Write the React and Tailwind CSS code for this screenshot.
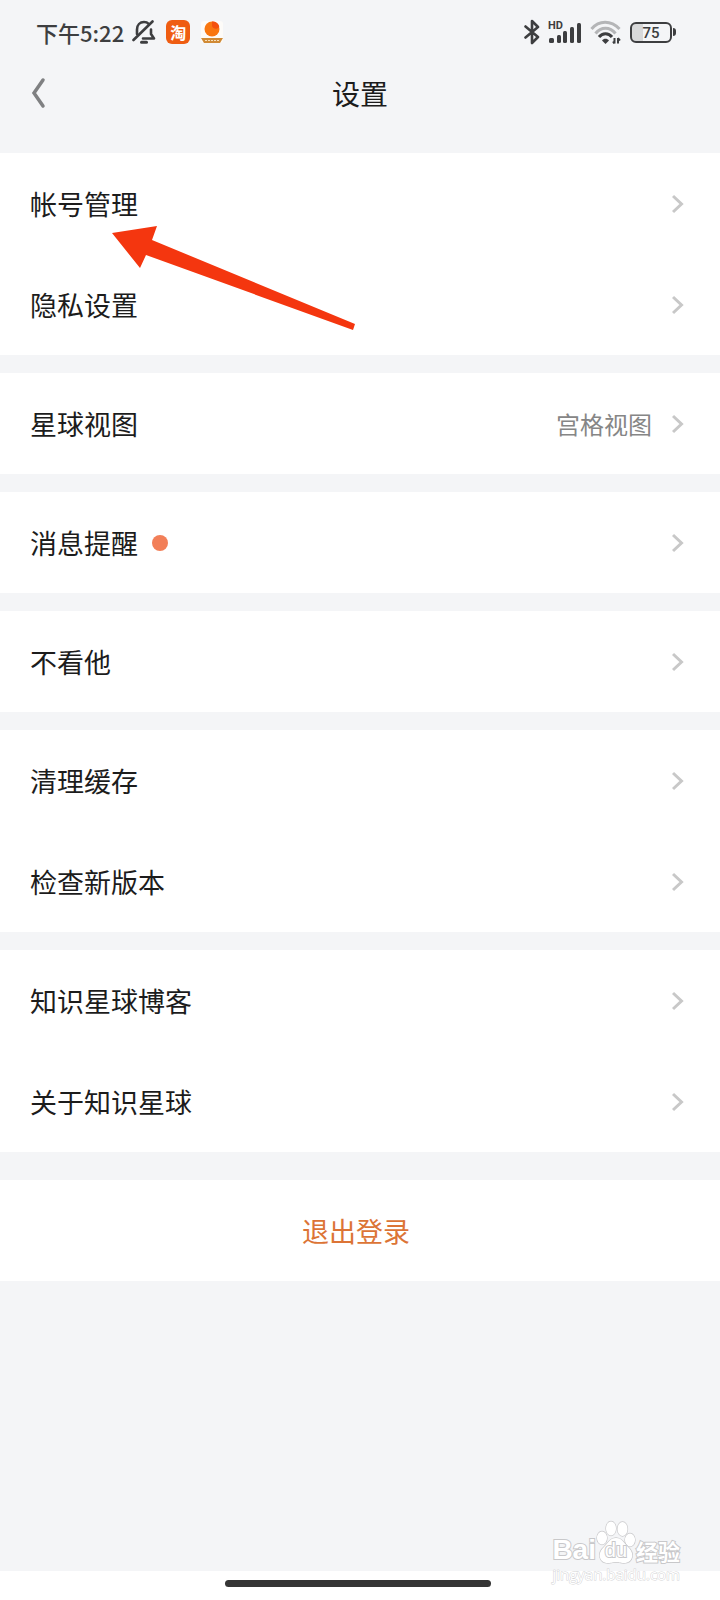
const GROUPS = [
  [{ label: '帐号管理' }, { label: '隐私设置' }],
  [{ label: '星球视图', value: '宫格视图' }],
  [{ label: '消息提醒', dot: true }],
  [{ label: '不看他' }],
  [{ label: '清理缓存' }, { label: '检查新版本' }],
  [{ label: '知识星球博客' }, { label: '关于知识星球' }],
]

function ChevronRight() {
  return (
    <svg className="w-3 h-5" viewBox="0 0 12 20" fill="none" stroke="#c8c8c8" strokeWidth="3">
      <path d="M1 2l8.500 8L1 18" />
    </svg>
  )
}

function BellOff() {
  return (
    <svg className="w-6 h-6" viewBox="0 0 24 24" fill="none" stroke="#3d3e40" strokeWidth="2.600" strokeLinecap="round" strokeLinejoin="round">
      <path d="M5 14V9.500C5 5 8 2 12 2c2 0 3.500.6 4.700 1.800M19 9.500V14l3 4.500H11" />
      <path d="M1.500 20L20.500 1.500" />
      <path d="M9.500 22.300h5" strokeWidth="3" />
    </svg>
  )
}

function PeachIcon() {
  return (
    <svg className="w-6 h-6" viewBox="0 0 24 24">
      <rect x="1" y="1" width="22" height="22" rx="3" fill="#fdfbf8" />
      <circle cx="12" cy="9" r="7.500" fill="#f9760f" />
      <path d="M12 1.500c4 0 7 2 7.200 5.500C17 10 13 9 12 6z" fill="#f4500c" />
      <path d="M1 18h22l-3 5H4z" fill="#d08a35" />
      <path d="M5 20.500h14" stroke="#f7dfba" strokeWidth="1.200" strokeDasharray="2 1" />
    </svg>
  )
}

function StatusBar() {
  return (
    <div className="h-16 pl-9 pr-11 flex items-center justify-between text-[#3d3e40]">
      <div className="flex items-center">
        <span className="text-[22px] leading-8 font-medium">下午5:22</span>
        <span className="ml-2"><BellOff /></span>
        <span className="ml-2.5 w-6 h-6 rounded-md bg-[#ef5d12] text-white text-base leading-6 font-bold text-center">淘</span>
        <span className="ml-2.5"><PeachIcon /></span>
      </div>
      <div className="flex items-center">
        <svg className="w-4 h-7" viewBox="0 0 16 28" fill="none" stroke="#3d3e40" strokeWidth="2.600" strokeLinejoin="round" strokeLinecap="round">
          <path d="M1.500 8.500L14 19l-6 6V3l6 6L1.500 19.500" />
        </svg>
        <svg className="ml-2 w-[34px] h-6" viewBox="0 0 34 24" fill="#3d3e40">
          <text x="0" y="9" fontSize="11" fontWeight="700" fontFamily="Roboto, sans-serif">HD</text>
          <rect x="1" y="18" width="5" height="5" rx="1.500" />
          <rect x="9" y="15" width="4" height="8" rx="1.500" />
          <rect x="15" y="11" width="4" height="12" rx="1.500" />
          <rect x="22" y="7" width="4" height="16" rx="1.500" />
          <rect x="29" y="3" width="4" height="20" rx="1.500" />
        </svg>
        <svg className="ml-2 w-8 h-6" viewBox="0 0 32 24" fill="none" strokeWidth="3">
          <path d="M1.500 9C9 0 21 0 29.500 9" stroke="#b4b5b7" />
          <path d="M5.500 13.500c5.500-7 14.500-7 20 0" stroke="#b4b5b7" />
          <path d="M9 17c3.500-4.500 9.500-4.500 13 0" stroke="#3d3e40" />
          <path d="M12 20.500c1.800-2.500 5.200-2.500 7 0L15.500 24z" fill="#3d3e40" />
          <path d="M24.500 18v5.500M28 23.500V18M23 21.500l1.500 2M28 18l2 2.500" stroke="#3d3e40" strokeWidth="2" />
        </svg>
        <span className="ml-2 flex items-center">
          <span className="w-[42px] h-[21px] border-2 border-[#3d3e40] rounded-md bg-linear-to-r from-[#d8d9da] from-30% to-[#f4f5f7] to-30% font-[Roboto] text-[15px] leading-[18px] font-medium text-center">75</span>
          <span className="ml-px w-[3px] h-2 rounded-r-sm bg-[#3d3e40]" />
        </span>
      </div>
    </div>
  )
}

function Row({ label, value, dot }) {
  return (
    <button className="w-full h-[101px] pl-[30px] pr-9 flex items-center text-left">
      <span className="text-[27px] leading-10 text-[#1c1c1c]">{label}</span>
      {dot && <span className="ml-3.5 w-4 h-4 rounded-full bg-[#f27f58]" />}
      <span className="ml-auto mr-5 text-2xl text-[#868686]">{value}</span>
      <ChevronRight />
    </button>
  )
}

function Arrow() {
  return (
    <svg className="absolute left-28 top-[73px] w-[244px] h-[106px] pointer-events-none" viewBox="0 0 244 106" fill="#f4360f">
      <path d="M0 7L45 0l-5 14 203 84-2 6L34 29l-6 13z" />
    </svg>
  )
}

function Watermark() {
  return (
    <div className="absolute right-10 bottom-4 text-white [paint-order:stroke_fill] [-webkit-text-stroke:2px_#c8c8ca]">
      <div className="flex items-end h-11 font-bold">
        <span className="font-['Liberation_Sans'] text-[28px] leading-7">Bai</span>
        <span className="relative w-10 h-11">
          <svg className="w-10 h-11" viewBox="0 0 40 44" fill="#fff" stroke="#c8c8ca" strokeWidth="1.300">
            <ellipse cx="6" cy="18" rx="5" ry="6.500" />
            <ellipse cx="15" cy="8.500" rx="5" ry="7" />
            <ellipse cx="26.500" cy="9" rx="5" ry="7" />
            <ellipse cx="34" cy="20" rx="5" ry="6.500" />
            <path d="M20 18c-6 0-8 5-12 9-7 6-5 16 4 16 4 0 5-1 8-1s4 1 8 1c9 0 11-10 4-16-4-4-6-9-12-9z" />
          </svg>
          <span className="absolute inset-x-0 bottom-0 text-center font-['Liberation_Sans'] font-normal text-xl leading-7">du</span>
        </span>
        <span className="text-[22px] leading-7">经验</span>
      </div>
      <div className="font-['Open_Sans'] text-[15px] leading-5 text-right [-webkit-text-stroke:1px_#d4d4d6]">jingyan.baidu.com</div>
    </div>
  )
}

function App() {
  return (
    <div className="relative min-h-screen flex flex-col bg-[#f4f5f7] font-['Noto_Sans_CJK_SC',sans-serif]">
      <StatusBar />
      <header className="h-[89px] px-7 pb-8 grid grid-cols-3 items-center">
        <button aria-label="返回" className="justify-self-start">
          <svg className="w-5 h-8" viewBox="0 0 20 32" fill="none" stroke="#7f8082" strokeWidth="3.500" strokeLinecap="round">
            <path d="M15 3L6 16l9 13" />
          </svg>
        </button>
        <h1 className="text-[28px] leading-10 text-center text-[#1c1c1c]">设置</h1>
      </header>
      <main className="flex flex-col gap-[18px]">
        {GROUPS.map((rows, i) => (
          <section key={i} className="relative bg-white">
            {rows.map((row) => <Row key={row.label} {...row} />)}
            {i === 0 && <Arrow />}
          </section>
        ))}
      </main>
      <button className="mt-7 h-[101px] pr-2 bg-white text-[27px] leading-10 text-[#dc7436]">退出登录</button>
      <footer className="mt-auto h-[29px] pr-1 pb-1 flex items-center justify-center bg-white">
        <div className="w-[266px] h-[7px] rounded-full bg-[#353535]" />
      </footer>
      <Watermark />
    </div>
  )
}

export default App
